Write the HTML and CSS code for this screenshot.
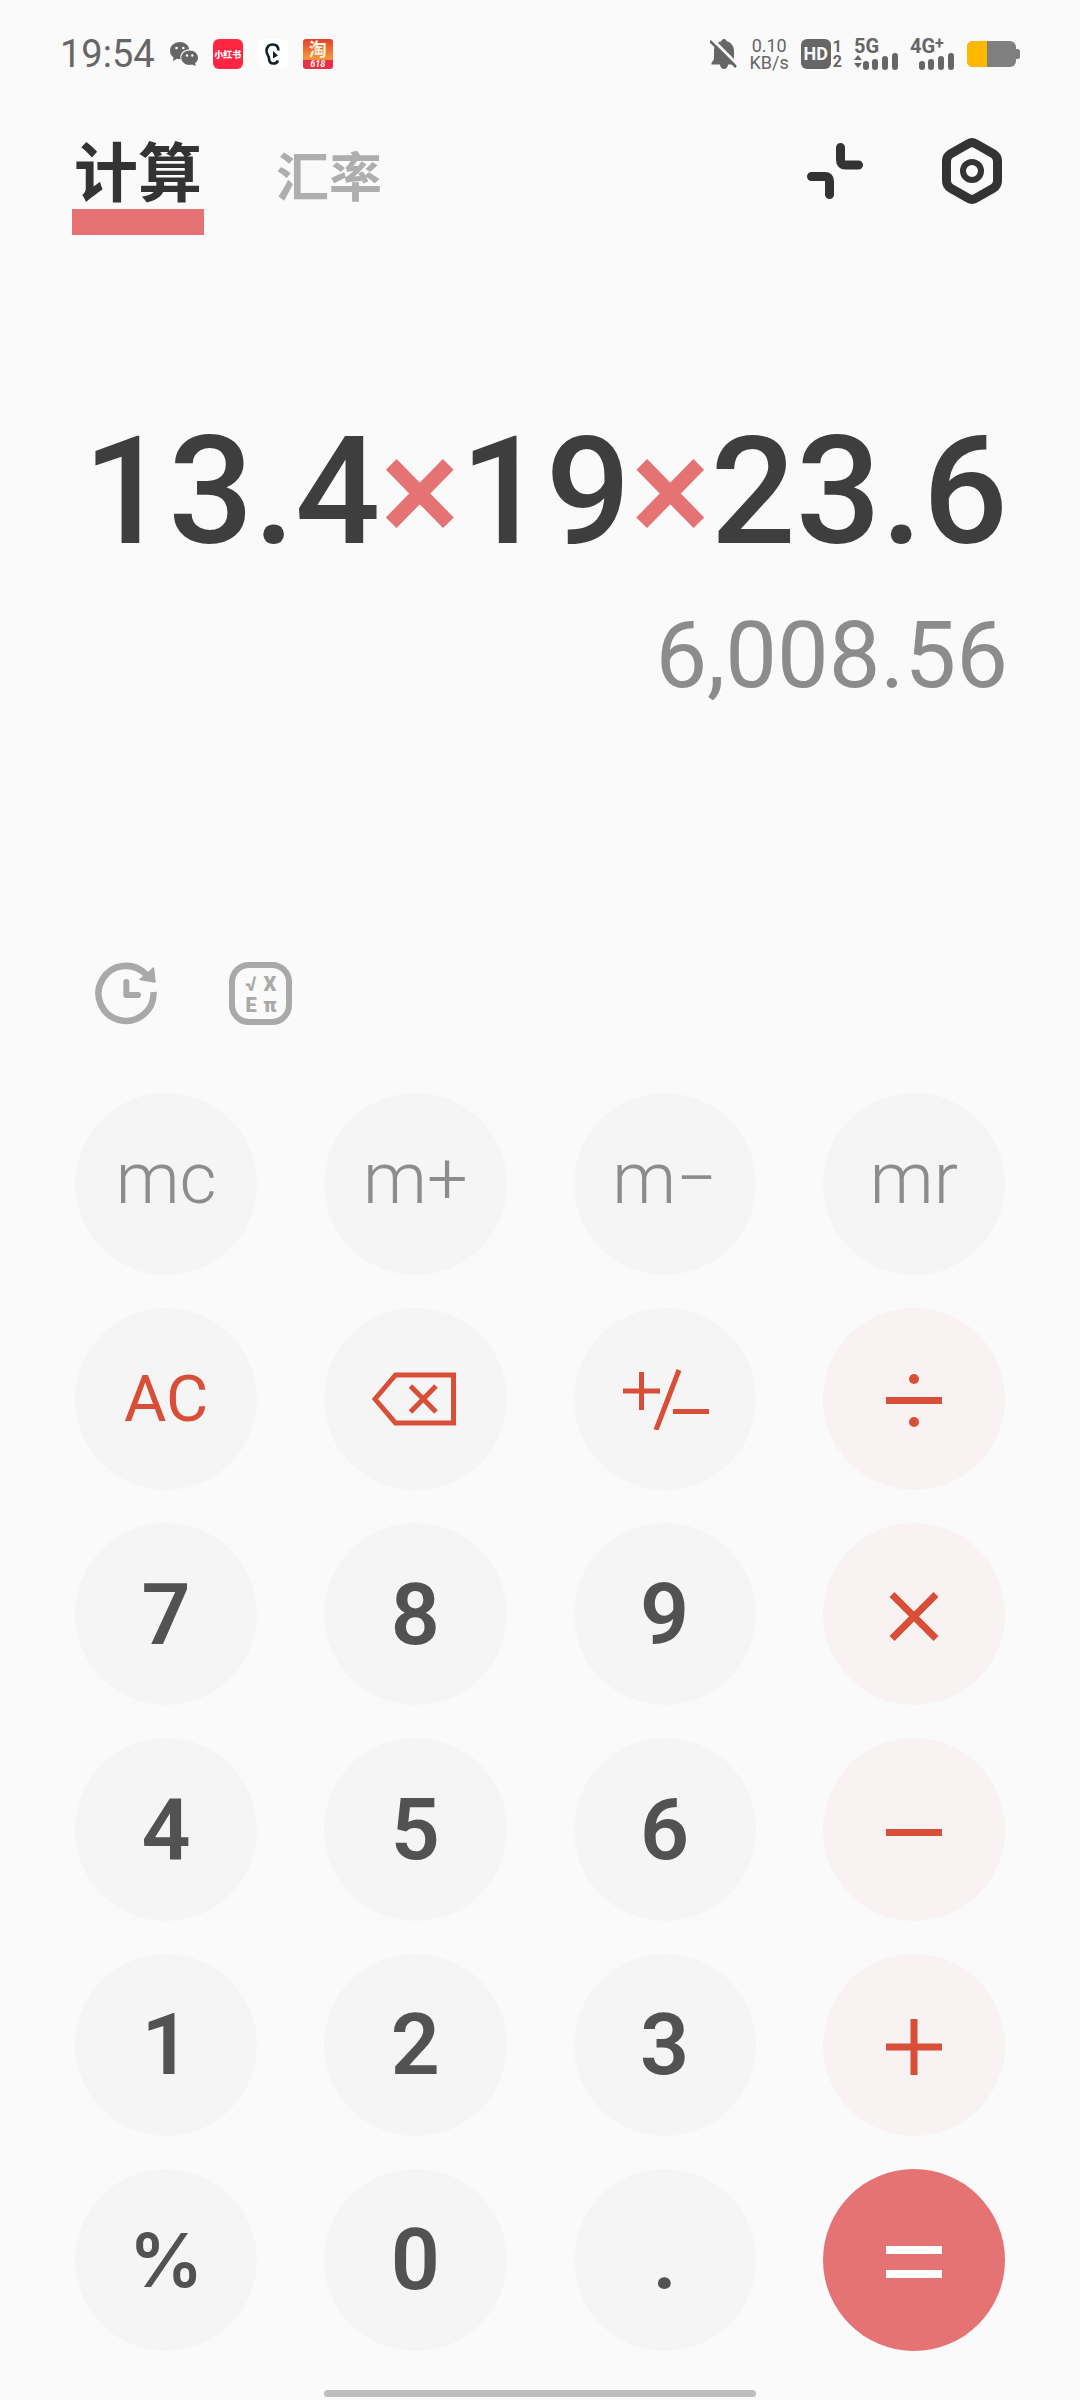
FILE: index.html
```html
<!DOCTYPE html>
<html lang="zh-CN">
<head>
<meta charset="utf-8">
<meta name="viewport" content="width=device-width, initial-scale=1">
<title>计算</title>
<link rel="stylesheet" href="styles.css">
</head>
<body>
<div class="app">
  <div class="status">
    <div class="status-left">
      <span class="clock">19:54</span>
      <svg class="wechat" viewBox="0 0 28 24" width="28" height="24" aria-hidden="true">
        <path d="M10 0C4.500 0 0 3.900 0 8.800c0 2.700 1.300 5 3.500 6.600L3 19l4-2.200c1 .3 2 .4 3 .4h.6C9.300 11.800 13.600 7.600 19.300 7.300 18.400 3 14.500 0 10 0z" fill="#666"/>
        <path d="M19.600 8.500c-4.600 0-8.300 3.200-8.300 7.200s3.700 7.200 8.300 7.200c.9 0 1.800-.1 2.600-.4l3.600 1.500-.7-3c1.800-1.300 2.900-3.200 2.900-5.300 0-4-3.800-7.200-8.400-7.200z" fill="#666"/>
        <g fill="#fafafa"><circle cx="6.500" cy="6" r="1.300"/><circle cx="13.300" cy="6" r="1.300"/><circle cx="17" cy="13.500" r="1.200"/><circle cx="22.300" cy="13.500" r="1.200"/></g>
      </svg>
      <span class="app-icon red">小红书</span>
      <span class="app-icon white">
        <svg viewBox="0 0 30 30" width="30" height="30" aria-hidden="true">
          <path d="M20.500 11.500C20.500 7.500 18 5.500 14.500 5.500S8.500 8 8.500 12c0 3.500 2.500 4.500 2.500 7.500 0 3 1 5 4.500 5 2.200 0 3.800-1 4.500-3" fill="none" stroke="#14202c" stroke-width="2.600"/>
          <path d="M15 12l5 4.500-5 3z" fill="#14202c"/>
        </svg>
      </span>
      <span class="app-icon taobao"><b>淘</b><i>618</i></span>
    </div>
    <div class="status-right">
      <svg class="bell" viewBox="0 0 28 30" width="28" height="30" aria-hidden="true">
        <path d="M14 0c1.500 0 2.500 1 2.700 2.200C21 3.400 24 7 24 12v8l2.500 4v1.500H18c0 2.500-1.800 4.500-4 4.500s-4-2-4-4.500H1.500V24L4 20v-8c0-5 3-8.600 7.300-9.800C11.500 1 12.500 0 14 0z" fill="#666"/>
        <path d="M2 0L28 26" stroke="#fafafa" stroke-width="3"/>
        <path d="M0 2l26 26" stroke="#666" stroke-width="2.500"/>
      </svg>
      <span class="speed"><span>0.10</span><span>KB/s</span></span>
      <span class="hd"><b>HD</b><span class="sims"><span>1</span><span>2</span></span></span>
      <span class="signal">
        <b>5G</b>
        <svg viewBox="0 0 44 17" width="44" height="17" aria-hidden="true">
          <path d="M0 7l4-5 4 5zM0 10l4 5 4-5z" fill="#666"/>
          <g fill="#666"><rect x="9" y="8" width="6" height="9" rx="3"/><rect x="18" y="6" width="6" height="11" rx="3"/><rect x="28" y="3" width="6" height="14" rx="3"/><rect x="38" y="0" width="6" height="17" rx="3"/></g>
        </svg>
      </span>
      <span class="signal">
        <b>4G<sup>+</sup></b>
        <svg viewBox="0 0 44 17" width="44" height="17" aria-hidden="true">
          <g fill="#666"><rect x="9" y="8" width="6" height="9" rx="3"/><rect x="18" y="6" width="6" height="11" rx="3"/><rect x="28" y="3" width="6" height="14" rx="3"/><rect x="38" y="0" width="6" height="17" rx="3"/></g>
        </svg>
      </span>
      <svg viewBox="0 0 54 28" width="54" height="28" aria-hidden="true">
        <rect x="1" y="1" width="49" height="26" rx="6" fill="#808080"/>
        <path d="M50 9h1.500q2.500 0 2.500 2.500v5q0 2.500-2.500 2.500H50z" fill="#808080"/>
        <path d="M21 1H7Q1 1 1 7v14q0 6 6 6h14z" fill="#ffb800"/>
      </svg>
    </div>
  </div>

  <header class="header">
    <nav class="tabs">
      <a class="tab active" href="#calc">计算</a>
      <a class="tab" href="#rate">汇率</a>
    </nav>
    <div class="actions">
      <button class="icon-button" type="button" aria-label="小窗">
        <svg viewBox="0 0 56 56" width="56" height="56">
          <path d="M33.500 4.500V17q0 5 5 5h13M4.500 33.500H18q4.500 0 4.500 4.500v13.500" fill="none" stroke="#333" stroke-width="9" stroke-linecap="round"/>
        </svg>
      </button>
      <button class="icon-button" type="button" aria-label="设置">
        <svg viewBox="0 0 60 66" width="60" height="66">
          <path d="M26.500 5.600Q30 3.600 33.500 5.600L51 15.500Q55.500 18.300 55.500 23V43Q55.500 47.700 51 50.500L33.500 60.400Q30 62.400 26.500 60.400L9 50.500Q4.500 47.700 4.500 43V23Q4.500 18.300 9 15.500Z" fill="none" stroke="#333" stroke-width="9"/>
          <circle cx="30" cy="33" r="9" fill="none" stroke="#333" stroke-width="6"/>
        </svg>
      </button>
    </div>
  </header>

  <main class="display">
    <output class="expression">13.4<span class="op">×</span>19<span class="op">×</span>23.6</output>
    <output class="result">6,008.56</output>
  </main>

  <div class="tools">
    <button class="icon-button" type="button" aria-label="历史记录">
      <svg viewBox="0 0 64 64" width="64" height="64">
        <path d="M58.500 31A27.500 27.500 0 1 1 51 13.500" fill="none" stroke="#a9a9a9" stroke-width="6.500"/>
        <path d="M58.500 7l1.500 14-15-2.500z" fill="#a9a9a9" stroke="#a9a9a9" stroke-width="1.500" stroke-linejoin="round"/>
        <path d="M31.300 21v13H43" fill="none" stroke="#a9a9a9" stroke-width="6" stroke-linecap="round" stroke-linejoin="round"/>
      </svg>
    </button>
    <button class="icon-button" type="button" aria-label="科学计算">
      <svg viewBox="0 0 64 64" width="64" height="64">
        <rect x="4" y="4" width="57" height="57" rx="17" fill="none" stroke="#a9a9a9" stroke-width="6"/>
        <g class="sci" fill="#a9a9a9" text-anchor="middle"><text x="23" y="30">√</text><text x="42" y="30">X</text><text x="23" y="51">E</text><text x="42" y="51">π</text></g>
      </svg>
    </button>
  </div>

  <div class="keypad">
    <button class="key memory" type="button">mc</button>
    <button class="key memory" type="button">m+</button>
    <button class="key memory" type="button">m−</button>
    <button class="key memory" type="button">mr</button>

    <button class="key clear" type="button">AC</button>
    <button class="key" type="button" aria-label="退格">
      <svg viewBox="0 0 86 54" width="86" height="54"><path d="M3 27L23.500 3h58v48h-58zM38.500 14L64 40M64 14L38.500 40" fill="none" stroke="#d84e37" stroke-width="5"/></svg>
    </button>
    <button class="key" type="button" aria-label="正负号">
      <svg viewBox="0 0 88 62" width="88" height="62"><path d="M2 23h37M20.500 4v38M58 2L35 62M52 43.500h36" fill="none" stroke="#d84e37" stroke-width="5"/></svg>
    </button>
    <button class="key operator" type="button" aria-label="除">
      <svg viewBox="0 0 56 56" width="56" height="56"><path d="M0 29.500h56" stroke="#d84e37" stroke-width="7"/><circle cx="28" cy="8" r="5" fill="#d84e37"/><circle cx="28" cy="51" r="5" fill="#d84e37"/></svg>
    </button>

    <button class="key" type="button">7</button>
    <button class="key" type="button">8</button>
    <button class="key" type="button">9</button>
    <button class="key operator" type="button" aria-label="乘">
      <svg viewBox="0 0 56 56" width="56" height="56"><path d="M6 8.500L50 52.500M50 8.500L6 52.500" stroke="#d84e37" stroke-width="7"/></svg>
    </button>

    <button class="key" type="button">4</button>
    <button class="key" type="button">5</button>
    <button class="key" type="button">6</button>
    <button class="key operator" type="button" aria-label="减">
      <svg viewBox="0 0 56 56" width="56" height="56"><path d="M0 31.500h56" stroke="#d84e37" stroke-width="7"/></svg>
    </button>

    <button class="key" type="button">1</button>
    <button class="key" type="button">2</button>
    <button class="key" type="button">3</button>
    <button class="key operator" type="button" aria-label="加">
      <svg viewBox="0 0 56 60" width="56" height="60"><path d="M0 32h56M28 4v56" stroke="#d84e37" stroke-width="7"/></svg>
    </button>

    <button class="key percent" type="button">%</button>
    <button class="key" type="button">0</button>
    <button class="key" type="button">.</button>
    <button class="key equals" type="button" aria-label="等于">
      <svg viewBox="0 0 56 56" width="56" height="56"><path d="M0 18h56M0 42h56" stroke="#fff" stroke-width="8"/></svg>
    </button>
  </div>

  <div class="home"><span class="home-bar"></span></div>
</div>
</body>
</html>
```

FILE: styles.css
```css
* { box-sizing: border-box; }

body {
  margin: 0;
  background: #fafafa;
  color: #3e3e3e;
  font-family: Roboto, "Noto Sans CJK SC", sans-serif;
}

button {
  margin: 0;
  padding: 0;
  border: 0;
  background: none;
  color: inherit;
  font: inherit;
}

svg { display: block; }

.app {
  display: flex;
  flex-direction: column;
  min-height: 100vh;
}

/* Status bar */
.status {
  display: flex;
  justify-content: space-between;
  align-items: center;
  height: 108px;
  padding: 0 60px;
  color: #666;
}

.status-left,
.status-right {
  display: flex;
  align-items: center;
}

.status-left { gap: 15px; }
.status-right { gap: 12px; }

.clock { font-size: 38px; line-height: 40px; }

.app-icon {
  display: flex;
  flex-direction: column;
  align-items: center;
  justify-content: center;
  width: 30px;
  height: 30px;
  border-radius: 6px;
  overflow: hidden;
}

.red {
  background: #ff2442;
  color: #fff;
  font-size: 9px;
  font-weight: 900;
  white-space: nowrap;
}

.white { background: #fff; }

.taobao {
  border-radius: 3px;
  background: linear-gradient(#e2402e, #f59a3c 68%, #e8304a 70%);
  color: #fff4dc;
}

.taobao b { font-size: 18px; line-height: 20px; }
.taobao i { font-size: 9px; line-height: 8px; font-weight: 700; }

.speed {
  display: flex;
  flex-direction: column;
  align-items: center;
  font-size: 18px;
  line-height: 17px;
}

.hd { display: flex; gap: 2px; }

.hd b {
  width: 30px;
  height: 30px;
  border-radius: 6px;
  background: #666;
  color: #fafafa;
  font-size: 18px;
  line-height: 30px;
  text-align: center;
}

.sims {
  display: flex;
  flex-direction: column;
  justify-content: space-between;
  font-size: 16px;
  font-weight: 700;
  line-height: 15px;
}

.signal {
  display: flex;
  flex-direction: column;
}

.signal b { font-size: 20px; line-height: 14px; }
.signal sup { font-size: 16px; line-height: 0; vertical-align: 4px; }

/* Header */
.header {
  display: flex;
  justify-content: space-between;
  align-items: flex-start;
  padding: 22px 78px 0 72px;
}

.tabs {
  display: flex;
  align-items: flex-end;
  gap: 72px;
}

.tab {
  padding-bottom: 14px;
  color: #aeaeae;
  font-size: 53px;
  font-weight: 700;
  line-height: 84px;
  text-decoration: none;
}

.tab.active {
  padding: 10px 2px 0;
  border-bottom: 26px solid #e67373;
  color: #333;
  font-size: 64px;
  line-height: 69px;
}

.actions {
  display: flex;
  align-items: center;
  gap: 79px;
  padding-top: 8px;
}

/* Expression and result */
.display {
  display: flex;
  flex: 1;
  flex-direction: column;
  align-items: flex-end;
  padding: 167px 72px 0;
}

.expression {
  font-size: 150px;
  font-weight: 500;
  line-height: 180px;
  white-space: nowrap;
}

.op { color: #e67373; }

.result {
  padding-top: 14px;
  color: #8c8c8c;
  font-size: 92px;
  line-height: 120px;
}

.tools {
  display: flex;
  gap: 69px;
  padding: 0 95px 68px;
}

.sci { font-size: 20px; font-weight: 900; }

/* Keypad */
.keypad {
  display: grid;
  grid-template-columns: repeat(4, 1fr);
  gap: 33px 67px;
  padding: 0 75px;
}

.key {
  display: flex;
  align-items: center;
  justify-content: center;
  aspect-ratio: 1;
  border-radius: 50%;
  background: #f5f5f5;
  color: #525252;
  font-size: 86px;
  font-weight: 600;
}

.memory {
  padding-bottom: 10px;
  color: #8c8c8c;
  font-size: 72px;
  font-weight: 300;
}

.clear { color: #d84e37; font-size: 65px; font-weight: 400; }
.percent { font-family: Inter, Roboto, sans-serif; font-size: 74px; font-weight: 600; }
.operator { background: #f8f2f2; }
.equals { background: #e67373; }

.home {
  display: flex;
  justify-content: center;
  padding: 39px 0 3px;
}

.home-bar {
  width: 40%;
  height: 7px;
  border-radius: 4px;
  background: #bdbdbd;
}
```
